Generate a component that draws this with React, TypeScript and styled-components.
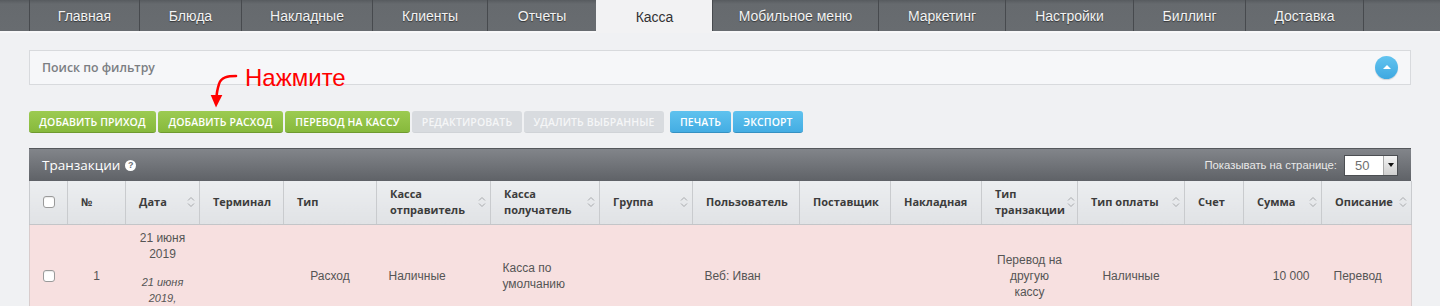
import React from 'react';
import styled, { createGlobalStyle } from 'styled-components';

const GlobalStyle = createGlobalStyle`
  html, body { margin: 0; padding: 0; background: #f0f1f3; }
  body { font-family: "Liberation Sans", Arial, sans-serif; }
  * { box-sizing: border-box; }
`;

const Nav = styled.nav`
  display: flex;
  height: 33px;
  padding-left: 29px;
  background: linear-gradient(#575b5f 0px, #666a6e 4px, #686c70 100%);
  border-bottom: 2px solid #f8f8f9;
`;

const Tab = styled.a<{ $w: number; $active?: boolean; $last?: boolean }>`
  flex: none;
  width: ${(p) => p.$w}px;
  display: flex;
  align-items: center;
  justify-content: center;
  font-size: 14px;
  color: ${(p) => (p.$active ? '#333' : '#f3f3f3')};
  text-shadow: ${(p) => (p.$active ? 'none' : '0 1px 1px rgba(0,0,0,0.5)')};
  background: ${(p) => (p.$active ? '#f2f2f3' : 'transparent')};
  border-left: 1px solid ${(p) => (p.$active ? '#f2f2f3' : '#474a4e')};
  border-right: ${(p) => (p.$last ? '1px solid #474a4e' : 'none')};
  margin-bottom: ${(p) => (p.$active ? '-2px' : '0')};
  cursor: pointer;
`;

const Main = styled.main`
  padding: 17px 29px 0;
`;

const FilterPanel = styled.div`
  height: 35px;
  display: flex;
  align-items: center;
  justify-content: space-between;
  padding: 0 12px;
  background: #f6f7f9;
  border: 1px solid #d8dadd;
`;

const FilterTitle = styled.span`
  font-family: "Open Sans", sans-serif;
  font-size: 12.3px;
  font-weight: 600;
  color: #7b7e82;
`;

const RoundButton = styled.button`
  width: 23px;
  height: 23px;
  border-radius: 50%;
  border: none;
  padding: 0;
  display: flex;
  align-items: center;
  justify-content: center;
  background: linear-gradient(#62c4f0, #3fa8e0);
  box-shadow: 0 1px 1px rgba(0, 0, 0, 0.15);
  &::after {
    content: '';
    width: 0;
    height: 0;
    border-left: 4px solid transparent;
    border-right: 4px solid transparent;
    border-bottom: 4px solid #fff;
    margin-top: -1px;
  }
`;

const Actions = styled.div`
  position: relative;
  margin-top: 26px;
  display: flex;
  gap: 2px;
`;

const Annotation = styled.div`
  position: absolute;
  left: 179px;
  top: -49px;
  width: 180px;
  height: 48px;
  pointer-events: none;
`;

const AnnotationArrow = styled.svg`
  position: absolute;
  left: 0;
  top: 0;
`;

const AnnotationText = styled.span`
  position: absolute;
  left: 37px;
  top: 2px;
  font-family: "Liberation Sans", Arial, sans-serif;
  font-size: 24px;
  line-height: 28px;
  color: #ff0000;
`;

type Variant = 'green' | 'gray' | 'blue';

const Btn = styled.button<{ $v: Variant; $w: number; $gapBefore?: boolean }>`
  flex: none;
  width: ${(p) => p.$w}px;
  height: 22px;
  padding: 0;
  border: none;
  border-radius: 3px;
  margin-left: ${(p) => (p.$gapBefore ? '4px' : '0')};
  font-family: "Open Sans", sans-serif;
  font-size: 10.5px;
  font-weight: 600;
  letter-spacing: 0.1px;
  text-transform: uppercase;
  text-align: center;
  white-space: nowrap;
  color: ${(p) => (p.$v === 'gray' ? '#f5f6f7' : '#fff')};
  background: ${(p) =>
    p.$v === 'green'
      ? 'linear-gradient(#9ccb51, #87b93c)'
      : p.$v === 'blue'
      ? 'linear-gradient(#5fc2ee, #44ade3)'
      : '#d8dbdf'};
  border-bottom: 1px solid
    ${(p) => (p.$v === 'green' ? '#6f9a2e' : p.$v === 'blue' ? '#3591c2' : '#d0d3d7')};
`;

const TablePanel = styled.section`
  margin-top: 15px;
`;

const HeadBar = styled.div`
  height: 33px;
  display: flex;
  align-items: center;
  justify-content: space-between;
  padding: 0 13px 0 13px;
  background: linear-gradient(#82858a, #5f6267);
  border-top: 1px solid #55585c;
`;

const Title = styled.h2`
  margin: 0;
  display: flex;
  align-items: center;
  gap: 5px;
  font-family: "Open Sans", sans-serif;
  font-size: 13.5px;
  font-weight: 400;
  color: #fff;
`;

const Help = styled.span`
  width: 11px;
  height: 11px;
  border-radius: 50%;
  background: #fff;
  color: #6a6d71;
  font-family: "Liberation Sans", Arial, sans-serif;
  font-size: 9px;
  font-weight: 700;
  line-height: 11px;
  text-align: center;
`;

const PerPage = styled.div`
  display: flex;
  align-items: center;
  gap: 7px;
  font-size: 11.3px;
  color: #e9e9e9;
`;

const Select = styled.div`
  width: 54px;
  height: 21px;
  display: flex;
  background: #fff;
  border: 1px solid #4b4e52;
`;

const SelectValue = styled.span`
  flex: 1;
  padding-left: 10px;
  font-size: 13px;
  line-height: 19px;
  color: #6f6f6f;
`;

const SelectToggle = styled.span`
  width: 14px;
  display: flex;
  align-items: center;
  justify-content: center;
  background: linear-gradient(#f4f4f4, #cfcfcf);
  border-left: 1px solid #a9a9a9;
  &::after {
    content: '';
    border-left: 3.5px solid transparent;
    border-right: 3.5px solid transparent;
    border-top: 4px solid #111;
  }
`;

const Table = styled.table`
  width: 100%;
  border-collapse: collapse;
  table-layout: fixed;
`;

const Th = styled.th`
  height: 43px;
  padding: 0 4px 0 13px;
  background: linear-gradient(#eceef0, #e0e2e5);
  border-right: 1px solid #c9cbce;
  border-bottom: 1px solid #c3c5c8;
  font-family: "Open Sans", sans-serif;
  font-size: 11px;
  font-weight: 700;
  line-height: 16px;
  color: #3c3c3c;
  text-align: left;
  &:first-child { border-left: 1px solid #c9cbce; padding: 0; }
`;

const ThInner = styled.div<{ $center?: boolean }>`
  display: flex;
  align-items: center;
  justify-content: ${(p) => (p.$center ? 'center' : 'space-between')};
  gap: 2px;
`;

const SortIcon = styled.svg`
  flex: none;
`;

const Td = styled.td<{ $align?: 'left' | 'center' | 'right' }>`
  padding: 5px 12px;
  background: #f7e0e0;
  font-size: 12px;
  line-height: 16px;
  color: #555;
  text-align: ${(p) => p.$align || 'left'};
  vertical-align: middle;
  &:first-child { border-left: 1px solid #d9cccc; }
  &:last-child { border-right: 1px solid #d9cccc; }
`;

const CheckBox = styled.span`
  display: inline-block;
  width: 12px;
  height: 12px;
  border: 1px solid #9a9a9a;
  border-radius: 3px;
  background: #fff;
  box-shadow: inset 0 1px 1px rgba(0, 0, 0, 0.08);
  vertical-align: middle;
`;

const SubDate = styled.div`
  margin-top: 12px;
  font-size: 11px;
  font-style: italic;
  line-height: 16px;
`;

const tabs: { label: string; w: number; active?: boolean }[] = [
  { label: 'Главная', w: 110 },
  { label: 'Блюда', w: 102 },
  { label: 'Накладные', w: 131 },
  { label: 'Клиенты', w: 115 },
  { label: 'Отчеты', w: 109 },
  { label: 'Касса', w: 116, active: true },
  { label: 'Мобильное меню', w: 166 },
  { label: 'Маркетинг', w: 127 },
  { label: 'Настройки', w: 128 },
  { label: 'Биллинг', w: 112 },
  { label: 'Доставка', w: 119 },
];

const buttons: { label: string; v: Variant; w: number; gap?: boolean }[] = [
  { label: 'Добавить приход', v: 'green', w: 127 },
  { label: 'Добавить расход', v: 'green', w: 125 },
  { label: 'Перевод на кассу', v: 'green', w: 125 },
  { label: 'Редактировать', v: 'gray', w: 110 },
  { label: 'Удалить выбранные', v: 'gray', w: 140 },
  { label: 'Печать', v: 'blue', w: 61, gap: true },
  { label: 'Экспорт', v: 'blue', w: 70 },
];

const columns: { label: React.ReactNode; w: number; sort?: boolean }[] = [
  { label: null, w: 38 },
  { label: '№', w: 58 },
  { label: 'Дата', w: 74, sort: true },
  { label: 'Терминал', w: 84 },
  { label: 'Тип', w: 93 },
  { label: <>Касса<br />отправитель</>, w: 114, sort: true },
  { label: <>Касса<br />получатель</>, w: 109, sort: true },
  { label: 'Группа', w: 93, sort: true },
  { label: 'Пользователь', w: 107 },
  { label: 'Поставщик', w: 91 },
  { label: 'Накладная', w: 91 },
  { label: <>Тип<br />транзакции</>, w: 96, sort: true },
  { label: 'Тип оплаты', w: 107, sort: true },
  { label: 'Счет', w: 59 },
  { label: 'Сумма', w: 78, sort: true },
  { label: 'Описание', w: 90, sort: true },
];

const Sort = () => (
  <SortIcon width="8" height="12" viewBox="0 0 8 12">
    <path d="M1 4.5 L4 1.5 L7 4.5 M1 7.5 L4 10.5 L7 7.5" fill="none" stroke="#a8aaad" strokeWidth="1" />
  </SortIcon>
);

export default function App() {
  return (
    <>
      <GlobalStyle />
      <Nav>
        {tabs.map((t, i) => (
          <Tab key={t.label} $w={t.w} $active={t.active} $last={i === tabs.length - 1}>
            {t.label}
          </Tab>
        ))}
      </Nav>
      <Main>
        <FilterPanel>
          <FilterTitle>Поиск по фильтру</FilterTitle>
          <RoundButton aria-label="Свернуть" />
        </FilterPanel>

        <Actions>
          <Annotation>
            <AnnotationArrow width="40" height="48" viewBox="0 0 40 48">
              <path
                d="M28 14 C 20 14, 13 15, 11 22 C 9.5 27, 8.7 30, 8.7 34"
                fill="none"
                stroke="#ff0000"
                strokeWidth="2.6"
                strokeLinecap="round"
              />
              <polygon points="2.7,33 14.3,33 8,45.5" fill="#ff0000" />
            </AnnotationArrow>
            <AnnotationText>Нажмите</AnnotationText>
          </Annotation>
          {buttons.map((b) => (
            <Btn key={b.label} $v={b.v} $w={b.w} $gapBefore={b.gap}>
              {b.label}
            </Btn>
          ))}
        </Actions>

        <TablePanel>
          <HeadBar>
            <Title>
              Транзакции <Help>?</Help>
            </Title>
            <PerPage>
              Показывать на странице:
              <Select>
                <SelectValue>50</SelectValue>
                <SelectToggle />
              </Select>
            </PerPage>
          </HeadBar>
          <Table>
            <colgroup>
              {columns.map((c, i) => (
                <col key={i} style={{ width: c.w }} />
              ))}
            </colgroup>
            <thead>
              <tr>
                {columns.map((c, i) => (
                  <Th key={i}>
                    {i === 0 ? (
                      <ThInner $center>
                        <CheckBox />
                      </ThInner>
                    ) : (
                      <ThInner>
                        <span>{c.label}</span>
                        {c.sort && <Sort />}
                      </ThInner>
                    )}
                  </Th>
                ))}
              </tr>
            </thead>
            <tbody>
              <tr>
                <Td $align="center"><CheckBox /></Td>
                <Td $align="center">1</Td>
                <Td $align="center">
                  21 июня 2019
                  <SubDate>21 июня 2019, 14:32</SubDate>
                </Td>
                <Td></Td>
                <Td $align="center">Расход</Td>
                <Td>Наличные</Td>
                <Td>Касса по умолчанию</Td>
                <Td></Td>
                <Td>Веб: Иван</Td>
                <Td></Td>
                <Td></Td>
                <Td $align="center">Перевод на другую кассу</Td>
                <Td $align="center">Наличные</Td>
                <Td></Td>
                <Td $align="right">10 000</Td>
                <Td>Перевод</Td>
              </tr>
            </tbody>
          </Table>
        </TablePanel>
      </Main>
    </>
  );
}
